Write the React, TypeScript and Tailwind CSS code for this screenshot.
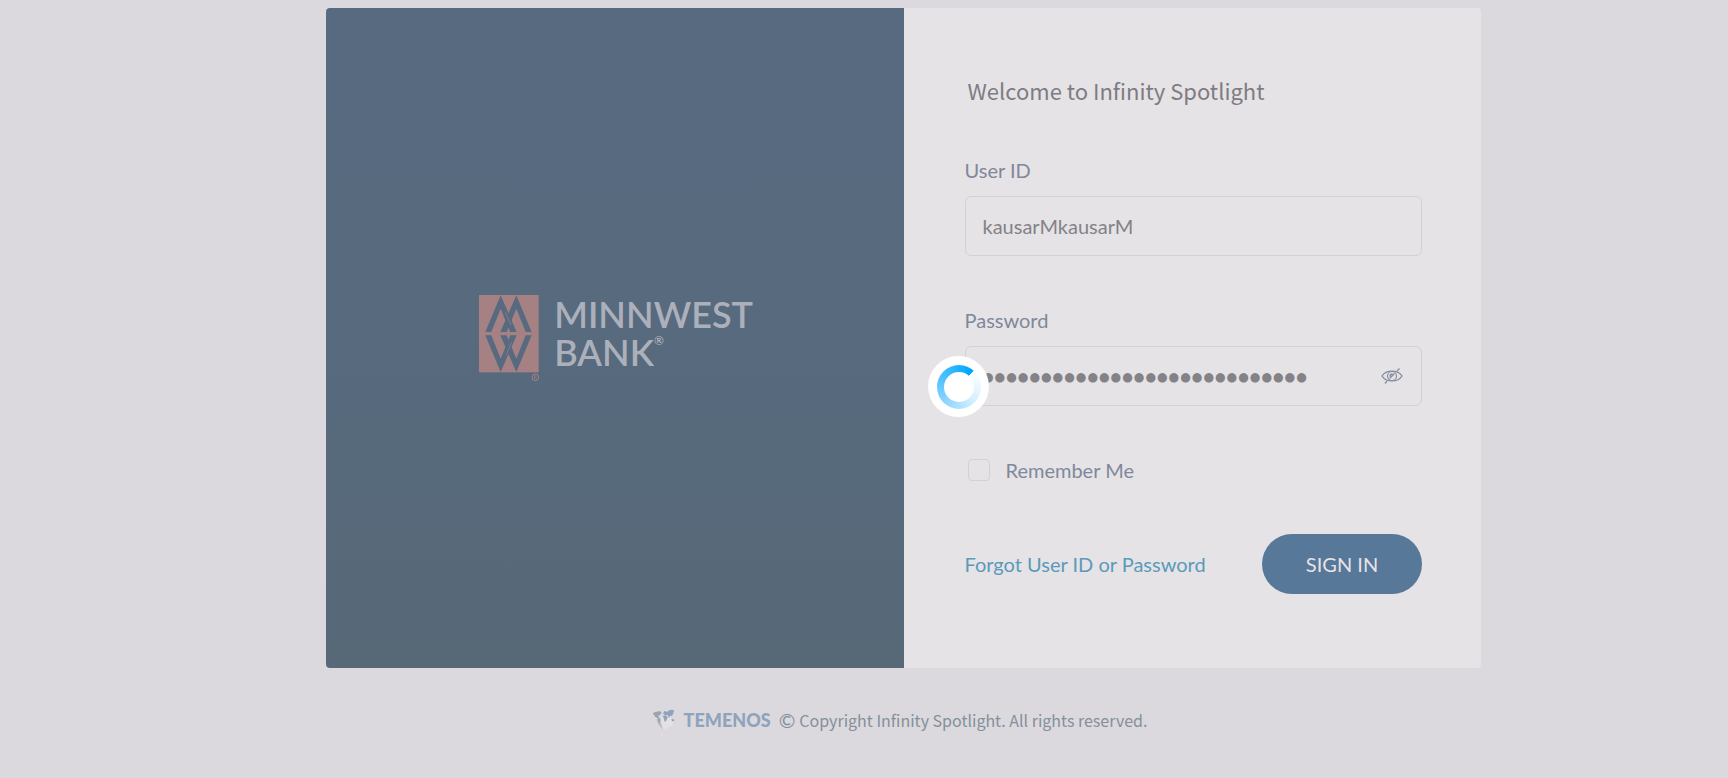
import { useState } from "react";

function BankLogo() {
  return (
    <div className="flex w-[271px] items-start gap-[13px] pt-[2px]">
      <svg viewBox="10 14 186 264" className="h-[88px] w-[62px] shrink-0" aria-hidden="true">
        <rect x="10" y="14" width="179" height="232" fill="#a58184" />
        <g fill="#576a7f">
          <path d="M75 15 L123 125 H104 L75 55 L47 125 H29 Z" />
          <path d="M122 15 L74 125 H93 L122 55 L150 125 H168 Z" />
          <path d="M75 245 L123 135 H104 L75 205 L47 135 H29 Z" />
          <path d="M122 245 L74 135 H93 L122 205 L150 135 H168 Z" />
        </g>
        <path d="M89 66 L106 104 M108 156 L91 194" stroke="#a58184" strokeWidth="2" />
        <circle cx="179" cy="261" r="10" fill="none" stroke="#a58184" strokeWidth="3" />
        <path d="M176 267 V256 H180 Q183 259 180 261 H176 M180 261 L183 267" fill="none" stroke="#a58184" strokeWidth="2" />
      </svg>
      <div className="text-4xl leading-[38px] font-semibold text-[#abb0bb]">
        <div>MINNWEST</div>
        <div className="flex items-start">
          BANK<span className="text-xs leading-4 font-semibold">®</span>
        </div>
      </div>
    </div>
  );
}

function EyeOff() {
  return (
    <svg viewBox="0 0 22 16" className="h-4 w-[22px]" fill="none" stroke="#8790a3" aria-hidden="true">
      <path d="M1 8 C5 1.5 17 1.5 21 8 C17 14.5 5 14.5 1 8 Z" strokeWidth="1.4" />
      <circle cx="11" cy="8" r="4.5" strokeWidth="1.2" />
      <path d="M4 15.5 L6 13 M16 3 L18.5 0.5 M8.5 10.5 L13.5 5.5 M9 8.5 Q9 6 11.5 6" strokeWidth="1.4" />
    </svg>
  );
}

function WorldMark() {
  return (
    <svg viewBox="10 18 72 66" className="h-[22px] w-6" aria-hidden="true">
      <path d="M28 50 L46 42 L76 48 L70 68 L43 82 Z" fill="#e3e1e4" />
      <path d="M24 48 L32 46 L44 82 L28 62 Z" fill="#b9bbc2" />
      <path d="M12 31 L20 27 L34 24 L39 29 L34 36 L29 38 L31 44 L36 49 L34 60 L29 56 L27 46 L20 42 Z" fill="#9ba5b2" />
      <path d="M43 32 L47 24 L56 26 L64 20 L76 21 L74 31 L70 39 L64 38 L61 44 L57 36 L49 36 Z" fill="#8ea3bd" />
      <path d="M43 38 L51 37 L57 43 L52 55 L48 56 L45 46 Z" fill="#8ea3bd" />
      <path d="M68 49 L75 48 L77 54 L70 55 Z" fill="#8ea3bd" />
    </svg>
  );
}

function Spinner() {
  return (
    <div
      role="status"
      aria-label="Loading"
      className="absolute top-[348px] left-[602px] grid size-[61px] place-items-center rounded-full bg-white"
    >
      <div className="grid size-11 place-items-center rounded-full bg-[conic-gradient(from_42deg,#ffffff,#d4f0ff_25%,#7fd0ff_55%,#00a8ff_98%)]">
        <div className="size-[30px] rounded-full bg-white" />
      </div>
    </div>
  );
}

export default function App() {
  const [show, setShow] = useState(false);
  return (
    <div className="min-h-screen bg-[#dbd9de] pt-2 pl-[79px] font-[Lato,sans-serif] text-xl text-[#7f889b]">
      <main className="relative mx-auto grid w-full max-w-[1155px] grid-cols-2 rounded bg-[#e5e3e6]">
        <section className="flex items-center justify-center rounded-l bg-linear-to-b from-[#576a7f] via-[#576a7e] to-[#576977]">
          <BankLogo />
        </section>
        <form className="pt-[62px] pr-[59px] pb-[74px] pl-[61px]" onSubmit={(e) => e.preventDefault()}>
          <h1 className="pl-[3px] font-['Noto_Sans_CJK_SC',sans-serif] text-[22px] leading-10 text-[#7e7c82]">
            Welcome to Infinity Spotlight
          </h1>
          <label htmlFor="user" className="mt-11 block leading-8">User ID</label>
          <input
            id="user"
            defaultValue="kausarMkausarM"
            className="mt-[10px] block h-[60px] w-full rounded-md border border-[#d2d1d5] px-[17px] text-[#838286] outline-none"
          />
          <label htmlFor="password" className="mt-12 block leading-8">Password</label>
          <div className="mt-[10px] flex h-[60px] items-center rounded-md border border-[#d2d1d5] pr-[18px] pl-[17px]">
            <input
              id="password"
              type={show ? "text" : "password"}
              defaultValue="infinityspotlightpassword123"
              className={`min-w-0 flex-1 text-[#838286] outline-none ${show ? "font-normal" : "font-black"}`}
            />
            <button type="button" aria-label="Show password" onClick={() => setShow(!show)}>
              <EyeOff />
            </button>
          </div>
          <label className="mt-12 flex items-center gap-4 pl-[3px] leading-8">
            <input type="checkbox" className="size-[22px] appearance-none rounded border border-[#d2d1d5] checked:bg-[#577899]" />
            Remember Me
          </label>
          <div className="mt-12 flex items-center justify-between">
            <a href="#forgot" className="text-[#5b9aba]">Forgot User ID or Password</a>
            <button type="submit" className="h-[60px] w-40 rounded-full bg-[#577899] text-[#e5e3e6]">SIGN IN</button>
          </div>
        </form>
        <Spinner />
      </main>
      <footer className="mt-9 flex items-center justify-center gap-2 pr-2 pb-10 leading-8">
        <WorldMark />
        <span className="text-lg font-black text-[#8ea3bd]">TEMENOS</span>
        <span className="flex items-center gap-1 text-[#84909a]">
          <span>©</span>
          <span className="font-['Noto_Sans_CJK_SC',sans-serif] text-base leading-8">
            Copyright Infinity Spotlight. All rights reserved.
          </span>
        </span>
      </footer>
    </div>
  );
}
